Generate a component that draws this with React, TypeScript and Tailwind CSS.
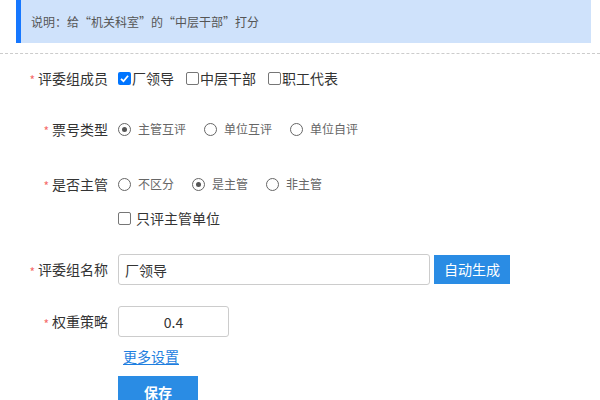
import React from "react"

const font = { fontFamily: '"Noto Sans CJK SC", "Noto Sans", sans-serif' }

const CheckBox = ({ checked }: { checked?: boolean }) =>
    checked ? (
        <span className="w-[13px] h-[13px] rounded-[2px] bg-[#0075ff] flex items-center justify-center shrink-0">
            <svg width="11" height="11" viewBox="0 0 12 12">
                <path d="M2.2 6.3 L4.9 9 L9.9 3" fill="none" stroke="white" strokeWidth="2" />
            </svg>
        </span>
    ) : (
        <span className="w-[13px] h-[13px] rounded-[2px] border border-[#767676] bg-white shrink-0" />
    )

const Radio = ({ checked }: { checked?: boolean }) => (
    <span className="w-[13px] h-[13px] rounded-full border border-[#666] bg-white flex items-center justify-center shrink-0">
        {checked && <span className="w-[5px] h-[5px] rounded-full bg-[#555]" />}
    </span>
)

const Label = ({ text }: { text: string }) => (
    <div className="w-[108px] shrink-0 flex justify-end items-center text-[14px] text-[#333]">
        <span className="text-[#f56c6c] text-[12px] mr-[3px] translate-y-[2px]">*</span>
        {text}
    </div>
)

const RadioGroup = ({ items, active }: { items: string[], active: number }) => (
    <div className="flex items-center">
        {items.map((item, i) => (
            <div key={i} className="flex items-center mr-[18px]">
                <Radio checked={i == active} />
                <span className="ml-[7px] text-[12px] text-[#666]">{item}</span>
            </div>
        ))}
    </div>
)

export default function App() {
    return (
        <div className="w-[600px] h-[400px] overflow-hidden bg-white" style={font}>
            <div className="ml-[16px] w-[575px] h-[43px] bg-[#cfe2fb] border-l-[5px] border-[#1677ff] flex items-center pl-[10px] text-[12px] text-[#555]">
                说明：给“机关科室”的“中层干部”打分
            </div>
            <div className="mt-[10px] border-t border-dashed border-[#ccc]" />

            <div className="mt-[8px] h-[32px] flex items-center">
                <Label text="评委组成员" />
                <div className="ml-[10px] flex items-center text-[14px] text-[#333]">
                    <CheckBox checked />
                    <span className="ml-[1px] mr-[12px]">厂领导</span>
                    <CheckBox />
                    <span className="ml-[1px] mr-[12px]">中层干部</span>
                    <CheckBox />
                    <span className="ml-[1px]">职工代表</span>
                </div>
            </div>

            <div className="mt-[19px] h-[32px] flex items-center">
                <Label text="票号类型" />
                <div className="ml-[10px]">
                    <RadioGroup items={["主管互评", "单位互评", "单位自评"]} active={0} />
                </div>
            </div>

            <div className="mt-[23px] h-[32px] flex items-center">
                <Label text="是否主管" />
                <div className="ml-[10px]">
                    <RadioGroup items={["不区分", "是主管", "非主管"]} active={1} />
                </div>
            </div>

            <div className="mt-[2px] ml-[118px] h-[32px] flex items-center text-[14px] text-[#333]">
                <CheckBox />
                <span className="ml-[5px]">只评主管单位</span>
            </div>

            <div className="mt-[20px] h-[31px] flex items-center">
                <Label text="评委组名称" />
                <input
                    className="ml-[10px] w-[312px] h-[31px] border border-[#ccc] rounded-[3px] pl-[6px] text-[14px] text-[#333] outline-none"
                    defaultValue="厂领导"
                    style={font}
                />
                <button className="ml-[4px] w-[76px] h-[29px] bg-[#2a8ce4] text-white text-[14px]" style={font}>
                    自动生成
                </button>
            </div>

            <div className="mt-[21px] h-[31px] flex items-center">
                <Label text="权重策略" />
                <input
                    className="ml-[10px] w-[111px] h-[31px] border border-[#ccc] rounded-[3px] text-center text-[14px] text-[#333] outline-none"
                    defaultValue="0.4"
                    style={font}
                />
            </div>

            <div className="mt-[11px] ml-[123px] text-[14px] text-[#1e7fe0] underline underline-offset-2 leading-[16px]">
                更多设置
            </div>

            <button className="mt-[12px] ml-[118px] w-[80px] h-[32px] bg-[#2a8ce4] text-white text-[14px] font-bold" style={font}>
                保存
            </button>
        </div>
    )
}
